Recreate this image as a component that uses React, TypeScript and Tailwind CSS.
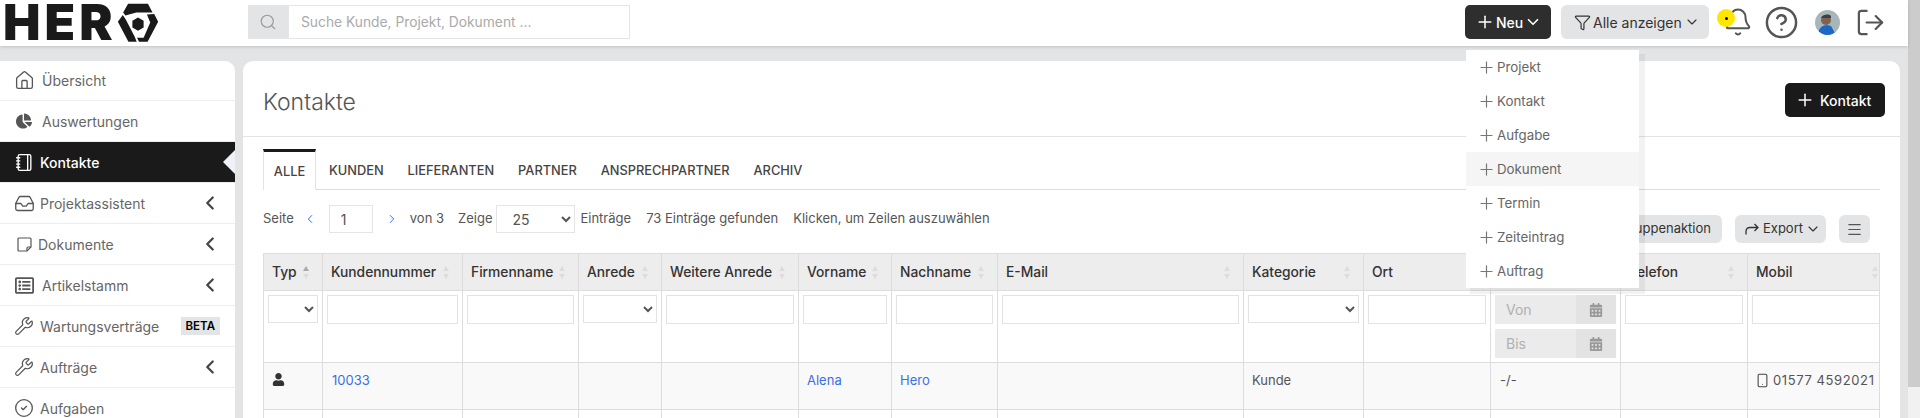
import React from 'react';
import {
  Bell, ChevronDown, ChevronLeft, ChevronRight, CircleCheck, CircleHelp, Filter, House,
  Inbox, LogOut, Menu, Notebook, Plus, Search, Smartphone, Wrench,
} from 'lucide-react';
import { FaChartPie, FaRegListAlt, FaUser, FaCalendarAlt } from 'react-icons/fa';

const DocIcon = () => (
  <svg width="15" height="15" viewBox="0 0 15 15" fill="none" stroke="currentColor" strokeWidth="1.2">
    <path d="M2 1h11a1 1 0 0 1 1 1v8l-4 4H2a1 1 0 0 1-1-1V2a1 1 0 0 1 1-1z" />
    <path d="M14 10h-3a1 1 0 0 0-1 1v3" />
  </svg>
);

const navItems = [
  { label: 'Übersicht', icon: <House size={21} strokeWidth={1.5} />, textClass: 'ml-[7px]' },
  { label: 'Auswertungen', icon: <FaChartPie size={16} />, textClass: 'ml-[7px]' },
  { label: 'Kontakte', icon: <Notebook size={19} strokeWidth={1.7} />, textClass: 'ml-[5px]', active: true },
  { label: 'Projektassistent', icon: <Inbox size={21} strokeWidth={1.5} />, textClass: 'ml-[5px]', arrow: true },
  { label: 'Dokumente', icon: <DocIcon />, textClass: 'ml-[3px]', arrow: true },
  { label: 'Artikelstamm', icon: <FaRegListAlt size={19} />, textClass: 'ml-[7px]', arrow: true },
  { label: 'Wartungsverträge', icon: <Wrench size={20} strokeWidth={1.4} />, textClass: 'ml-[5px]', beta: true },
  { label: 'Aufträge', icon: <Wrench size={20} strokeWidth={1.4} />, textClass: 'ml-[5px]', arrow: true },
  { label: 'Aufgaben', icon: <CircleCheck size={20} strokeWidth={1.6} />, textClass: 'ml-[5px]' },
];

const tabs = ['KUNDEN', 'LIEFERANTEN', 'PARTNER', 'ANSPRECHPARTNER', 'ARCHIV'];
const newItems = ['Projekt', 'Kontakt', 'Aufgabe', 'Dokument', 'Termin', 'Zeiteintrag', 'Auftrag'];

const columns = [
  { title: 'Typ', width: 'w-[59px]', filter: 'select' },
  { title: 'Kundennummer', width: 'w-[140px]', filter: 'input' },
  { title: 'Firmenname', width: 'w-[116px]', filter: 'input' },
  { title: 'Anrede', width: 'w-[83px]', filter: 'select' },
  { title: 'Weitere Anrede', width: 'w-[137px]', filter: 'input' },
  { title: 'Vorname', width: 'w-[93px]', filter: 'input' },
  { title: 'Nachname', width: 'w-[106px]', filter: 'input' },
  { title: 'E-Mail', width: 'w-[246px]', filter: 'input' },
  { title: 'Kategorie', width: 'w-[120px]', filter: 'select' },
  { title: 'Ort', width: 'w-[127px]', filter: 'input' },
  { title: '', width: 'w-[130px]', filter: 'date' },
  { title: 'Telefon', width: 'w-[127px]', filter: 'input' },
  { title: 'Mobil', width: 'w-[144px]', filter: 'input' },
];

const SortIcon = ({ up }: { up?: boolean }) => (
  <svg width="6" height="13" viewBox="0 0 6 13" className="shrink-0">
    <path d="M3 0 6 5H0z" fill={up ? '#aaaaaa' : '#dddddd'} />
    <path d="M3 13 0 8h6z" fill="#dddddd" />
  </svg>
);

const LogoMark = () => (
  <svg width="44" height="39" viewBox="12 8 132 118" className="shrink-0">
    <path d="M45 10h60l14 27H70L37 46 30 37z" fill="#1a1a1a" />
    <path d="M124 41l12 24-32 60H78l-6-12h20l20-46-10-24z" fill="#1a1a1a" />
    <path d="M29 44l9 14 27 52 6 15H46L14 65z" fill="#1a1a1a" />
    <path d="M75 52l17 10v20L75 92 58 82V62z" fill="#1a1a1a" />
  </svg>
);

const Avatar = () => (
  <svg width="25" height="25" viewBox="0 0 25 25" className="rounded-full">
    <rect width="25" height="25" fill="#a9b6b8" />
    <path d="M3 25c0-6 4-10 9-10l4 1 5 9z" fill="#1d68c4" />
    <circle cx="11" cy="10" r="5" fill="#7d6355" />
    <path d="M6 8c1-3 7-5 10-2v2H6z" fill="#3c3f44" />
  </svg>
);

const FilterCell = ({ type }: { type: string }) => {
  if (type === 'select') {
    return <select className="block w-full h-[28px] bg-white border border-[#e3e3e3] text-[13px]" />;
  }
  if (type === 'date') {
    return (
      <div className="flex flex-col gap-[5px]">
        {['Von', 'Bis'].map((label) => (
          <div key={label} className="flex h-[29px] bg-[#ebebeb] text-[14px] text-[#b0b0b0]">
            <span className="flex-1 pl-[11px] leading-[29px]">{label}</span>
            <span className="w-[40px] bg-[#e3e3e3] flex items-center justify-center text-[#999999]">
              <FaCalendarAlt size={14} />
            </span>
          </div>
        ))}
      </div>
    );
  }
  return <input readOnly className="block w-full h-[29px] bg-white border border-[#e3e3e3]" />;
};

const App: React.FC = () => {
  return (
    <div className="flex h-[418px] w-[1920px] overflow-hidden bg-[#e3e4e6] text-[14px] text-[#666666] font-[family-name:Inter,sans-serif]">
      <div className="flex flex-col w-[1908px]">
        <header className="flex items-center h-[46px] pb-[2px] shrink-0 bg-white shadow-[0_1px_3px_rgba(0,0,0,0.15)] z-10">
          <div className="flex items-center w-[248px] pl-[3px] shrink-0">
            <span className="text-[50px] leading-[46px] font-black text-[#1a1a1a] tracking-[4px]">HER</span>
            <LogoMark />
          </div>
          <div className="flex w-[382px] h-[34px]">
            <span className="flex items-center justify-center w-[40px] bg-[#e3e4e6] text-[#999999]">
              <Search size={18} strokeWidth={1.5} />
            </span>
            <input
              readOnly
              placeholder="Suche Kunde, Projekt, Dokument ..."
              className="flex-1 pl-[12px] border border-[#e5e5e5] text-[13.8px] placeholder:text-[#aaaaaa]"
            />
          </div>

          <div className="relative ml-[835px]">
            <button className="flex items-center w-[86px] h-[34px] pl-[10px] rounded-[5px] bg-[#2e2e2e] text-white font-medium">
              <Plus size={20} strokeWidth={1.8} />
              <span className="ml-[1px]">Neu</span>
              <ChevronDown size={18} strokeWidth={2.2} className="ml-[1px]" />
            </button>
            <div className="absolute left-[1px] top-[45px] w-[173px] bg-white text-[13.3px] shadow-[5px_5px_0_1px_rgba(0,0,0,0.05)] z-20">
              {newItems.map((item) => (
                <div key={item} className={`flex items-center h-[34px] pl-[11px] ${item === 'Dokument' ? 'bg-[#f5f5f5]' : ''}`}>
                  <Plus size={19} strokeWidth={1.5} className="text-[#777777]" />
                  <span className="ml-[1px] pt-[2px]">{item}</span>
                </div>
              ))}
            </div>
          </div>

          <button className="flex items-center w-[148px] h-[34px] ml-[10px] pl-[13px] rounded-[6px] bg-[#e3e4e6] text-[#333333]">
            <Filter size={17} strokeWidth={1.7} />
            <span className="ml-[2px]">Alle anzeigen</span>
            <ChevronDown size={16} strokeWidth={1.7} className="ml-[2px]" />
          </button>

          <div className="relative ml-[14px] w-[30px] h-[30px] text-[#555555]">
            <Bell size={30} strokeWidth={1.6} />
            <span className="absolute left-[-6px] top-[2px] flex items-center justify-center w-[18px] h-[18px] rounded-full bg-[#ffe600]">
              <span className="w-[3px] h-[3px] rounded-full bg-black" />
            </span>
          </div>
          <CircleHelp size={35} strokeWidth={1.7} className="ml-[11px] text-[#555555]" />
          <span className="ml-[16px] h-[25px]">
            <Avatar />
          </span>
          <LogOut size={31} strokeWidth={1.7} className="ml-[15px] text-[#555555]" />
        </header>

        <div className="flex gap-[8px] pt-[15px] flex-1 min-h-0">
          <nav className="w-[235px] shrink-0 bg-white rounded-tr-[10px]">
            {navItems.map((item) => (
              <div
                key={item.label}
                className={`relative flex items-center h-[41px] first:h-[40px] pl-[13px] border-b border-[#eeeeee] ${item.active ? 'bg-[#1a1a1a] text-white font-medium' : ''}`}
              >
                <span className={`w-[22px] flex justify-center ${item.active ? 'text-white' : 'text-[#555555]'}`}>{item.icon}</span>
                <span className={item.textClass}>{item.label}</span>
                {item.arrow && <ChevronLeft size={22} strokeWidth={2.4} className="ml-auto mr-[14px] text-[#444444]" />}
                {item.beta && (
                  <span className="ml-auto mr-[15px] px-[5px] h-[18px] leading-[18px] bg-[#e3e4e6] text-[11.5px] font-semibold text-black">
                    BETA
                  </span>
                )}
                {item.active && (
                  <span className="absolute right-0 top-[8px] border-y-[12px] border-r-[12px] border-y-transparent border-r-[#eef2f8]" />
                )}
              </div>
            ))}
          </nav>

          <main className="w-[1657px] shrink-0 bg-white rounded-t-[10px]">
            <div className="flex items-start justify-between h-[76px] pl-[20px] pr-[15px] border-b border-[#e3e3e3]">
              <h1 className="mt-[27px] text-[23px] leading-[28px] font-light text-[#555555]">Kontakte</h1>
              <button className="flex items-center mt-[22px] w-[100px] h-[34px] pl-[10px] rounded-[5px] bg-[#1a1a1a] text-white font-medium">
                <Plus size={20} strokeWidth={1.8} />
                <span className="ml-[5px]">Kontakt</span>
              </button>
            </div>

            <div className="px-[20px]">
              <div className="flex h-[53px] pt-[12px] border-b border-[#dddddd] text-[12.8px] font-medium text-[#444444]">
                <span className="w-[53px] h-[41px] mr-[1px] pt-[10px] text-center border-t-[3px] border-x border-t-[#1a1a1a] border-x-[#e3e3e3] bg-white">
                  ALLE
                </span>
                {tabs.map((tab) => (
                  <span key={tab} className="px-[12px] pt-[12px]">{tab}</span>
                ))}
              </div>

              <div className="flex justify-between h-[38px] mt-[15px] mb-[10px] text-[13px] text-[#555555]">
                <div className="flex items-center h-[28px]">
                  <span>Seite</span>
                  <ChevronLeft size={14} strokeWidth={1.7} className="ml-[9px] text-[#2f6fed]" />
                  <input readOnly value="1" className="w-[44px] h-[28px] ml-[12px] pl-[11px] border border-[#e5e5e5] text-[14px]" />
                  <ChevronRight size={14} strokeWidth={1.7} className="ml-[12px] text-[#2f6fed]" />
                  <span className="ml-[11px]">von 3</span>
                  <span className="ml-[14px]">Zeige</span>
                  <select defaultValue="25" className="w-[79px] h-[28px] ml-[4px] pl-[11px] border border-[#e5e5e5] bg-white text-[14px]">
                    <option>25</option>
                  </select>
                  <span className="ml-[5px]">Einträge</span>
                  <span className="ml-[15px]">73 Einträge gefunden</span>
                  <span className="ml-[15px]">Klicken, um Zeilen auszuwählen</span>
                </div>
                <div className="flex items-start gap-[13px] pr-[10px] pt-[10px] text-[#333333]">
                  <button className="h-[28px] px-[11px] rounded-[6px] bg-[#e3e4e6]">Gruppenaktion</button>
                  <button className="flex items-center w-[91px] h-[28px] pl-[10px] rounded-[6px] bg-[#e3e4e6]">
                    <svg width="14" height="12" viewBox="0 0 14 12" fill="none" stroke="#333333" strokeWidth="1.3">
                      <path d="M1 11.5V8.5C1 6 2.5 4.5 5 4.5H13M9.5 1L13 4.5 9.5 8" />
                    </svg>
                    <span className="ml-[4px]">Export</span>
                    <ChevronDown size={16} strokeWidth={1.7} className="ml-[2px]" />
                  </button>
                  <button className="flex items-center justify-center w-[31px] h-[28px] rounded-[6px] bg-[#e3e4e6] text-[#555555]">
                    <Menu size={17} strokeWidth={1.7} />
                  </button>
                </div>
              </div>

              <div className="w-[1617px] overflow-hidden border-r border-[#dddddd]">
                <table className="table-fixed w-[1628px] border-collapse text-[13px] text-[#555555]">
                  <colgroup>
                    {columns.map((col, i) => (
                      <col key={i} className={col.width} />
                    ))}
                  </colgroup>
                  <thead>
                    <tr className="h-[37px] bg-[#ededed]">
                      {columns.map((col, i) => (
                        <th key={i} className="border border-[#dddddd] pl-[8px] pr-[13px] text-[13.8px] font-medium text-[#333333] text-left">
                          <div className="flex items-center justify-between">
                            <span>{col.title}</span>
                            <SortIcon up={i === 0} />
                          </div>
                        </th>
                      ))}
                    </tr>
                    <tr className="h-[72px]">
                      {columns.map((col, i) => (
                        <td key={i} className="border border-[#dddddd] align-top pt-[4px] px-[4px]">
                          <FilterCell type={col.filter} />
                        </td>
                      ))}
                    </tr>
                  </thead>
                  <tbody>
                    <tr className="h-[47px] bg-[#f9f9f9] align-top">
                      <td className="border border-[#dddddd] pl-[8px] pt-[10px] text-[#333333]"><FaUser size={13} /></td>
                      <td className="border border-[#dddddd] pl-[9px] pt-[8px] text-[#3b6fe8]">10033</td>
                      <td className="border border-[#dddddd]" />
                      <td className="border border-[#dddddd]" />
                      <td className="border border-[#dddddd]" />
                      <td className="border border-[#dddddd] pl-[8px] pt-[8px] text-[#3b6fe8]">Alena</td>
                      <td className="border border-[#dddddd] pl-[8px] pt-[8px] text-[#3b6fe8]">Hero</td>
                      <td className="border border-[#dddddd]" />
                      <td className="border border-[#dddddd] pl-[8px] pt-[8px]">Kunde</td>
                      <td className="border border-[#dddddd]" />
                      <td className="border border-[#dddddd] pl-[9px] pt-[8px]">-/-</td>
                      <td className="border border-[#dddddd]" />
                      <td className="border border-[#dddddd] pl-[7px] pt-[8px]">
                        <div className="flex items-center gap-[3px] whitespace-nowrap tracking-[0.6px]">
                          <Smartphone size={15} strokeWidth={1.7} className="text-[#444444]" />
                          01577 4592021
                        </div>
                      </td>
                    </tr>
                    <tr className="h-[47px]">
                      {columns.map((col, i) => (
                        <td key={i} className="border border-[#dddddd]" />
                      ))}
                    </tr>
                  </tbody>
                </table>
              </div>
            </div>
          </main>
        </div>
      </div>

      <div className="w-[12px] shrink-0 bg-[#f1f1f1]">
        <div className="h-[387px] bg-[#cccccc]" />
      </div>
    </div>
  );
};

export default App;
